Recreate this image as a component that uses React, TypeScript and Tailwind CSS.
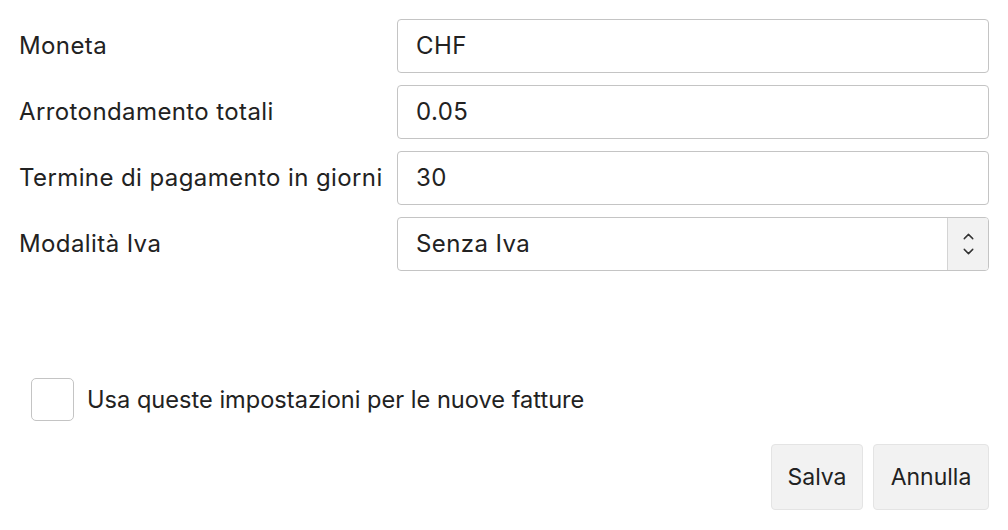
import {ChevronUp, ChevronDown} from "lucide-react";

const rows = [
  {label: "Moneta", value: "CHF"},
  {label: "Arrotondamento totali", value: "0.05"},
  {label: "Termine di pagamento in giorni", value: "30"},
];

export default function App() {
  return (
    <div className="w-[1008px] h-[530px] bg-white text-[#222] font-['Inter',sans-serif] text-[24px] px-[19px] pt-[19px]">
      <div className="flex flex-col gap-[12px] tracking-[0.4px]">
        {rows.map((r) => (
          <div key={r.label} className="flex items-center">
            <label className="w-[378px] shrink-0 whitespace-nowrap">{r.label}</label>
            <div className="flex-1 h-[54px] border border-[#c4c4c4] rounded-[4px] flex items-center pl-[18px]">
              {r.value}
            </div>
          </div>
        ))}
        <div className="flex items-center">
          <label className="w-[378px] shrink-0">Modalità Iva</label>
          <div className="flex-1 h-[54px] border border-[#c4c4c4] rounded-[4px] flex items-stretch overflow-hidden">
            <div className="flex-1 flex items-center pl-[18px]">Senza Iva</div>
            <div className="w-[41px] bg-[#f2f2f2] border-l border-[#d4d4d4] flex flex-col items-center justify-center text-[#333] -space-y-[2px]">
              <ChevronUp size={17} strokeWidth={2} />
              <ChevronDown size={17} strokeWidth={2} />
            </div>
          </div>
        </div>
      </div>

      <div className="mt-[107px] ml-[12px] flex items-center gap-[13px]">
        <div className="w-[43px] h-[43px] border border-[#c4c4c4] rounded-[5px]" />
        <span className="text-[23.6px]">Usa queste impostazioni per le nuove fatture</span>
      </div>

      <div className="mt-[23px] flex justify-end gap-[10px] text-[23px]">
        <button className="h-[66px] w-[92px] bg-[#f2f2f2] border border-[#e4e4e4] rounded-[4px]">Salva</button>
        <button className="h-[66px] w-[116px] bg-[#f2f2f2] border border-[#e4e4e4] rounded-[4px]">Annulla</button>
      </div>
    </div>
  );
}
